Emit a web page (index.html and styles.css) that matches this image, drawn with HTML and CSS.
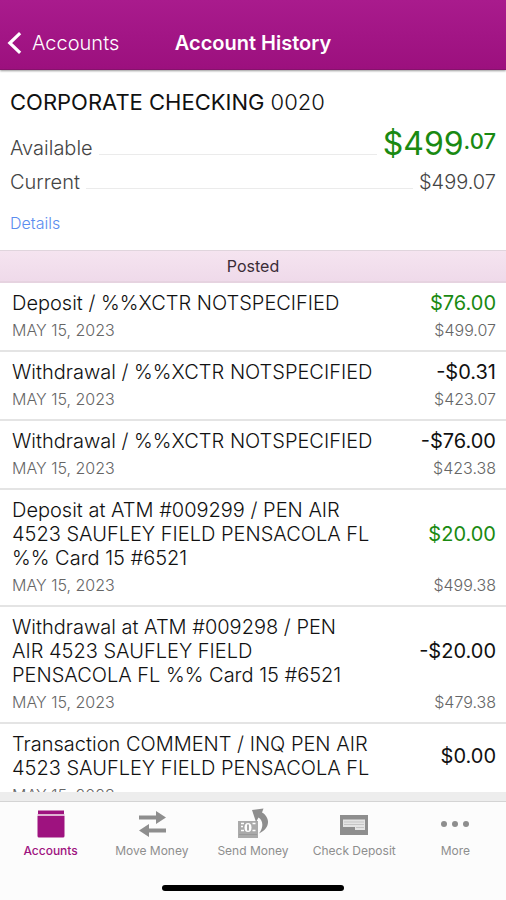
FILE: index.html
```html
<!DOCTYPE html>
<html lang="en">
  <head>
    <meta charset="utf-8" />
    <meta name="viewport" content="width=device-width, initial-scale=1" />
    <title>Account History</title>
    <link rel="stylesheet" href="styles.css" />
  </head>

  <body>
    <header class="navbar">
      <a class="back" href="#accounts">
        <svg class="back-icon" viewBox="0 0 16 24" aria-hidden="true">
          <path d="M14 1.5 L3 12 L14 22.5" fill="none" stroke="currentColor" stroke-width="3.4" />
        </svg>
        Accounts
      </a>
      <h1 class="title">Account History</h1>
    </header>

    <main class="content">
      <section class="summary">
        <h2 class="account-name">CORPORATE CHECKING <span class="account-number">0020</span></h2>
        <div class="balance">
          <span class="balance-label">Available</span>
          <span class="leader"></span>
          <span class="available">$499<span class="cents">.07</span></span>
        </div>
        <div class="balance">
          <span class="balance-label">Current</span>
          <span class="leader"></span>
          <span class="current">$499.07</span>
        </div>
        <a class="details" href="#details">Details</a>
      </section>

      <h2 class="group">Posted</h2>
      <ul class="transactions">
        <li class="transaction">
          <span class="description">Deposit / %%XCTR NOTSPECIFIED</span>
          <span class="amount credit">$76.00</span>
          <span class="date">MAY 15, 2023</span>
          <span class="running">$499.07</span>
        </li>
        <li class="transaction">
          <span class="description">Withdrawal / %%XCTR NOTSPECIFIED</span>
          <span class="amount">-$0.31</span>
          <span class="date">MAY 15, 2023</span>
          <span class="running">$423.07</span>
        </li>
        <li class="transaction">
          <span class="description">Withdrawal / %%XCTR NOTSPECIFIED</span>
          <span class="amount">-$76.00</span>
          <span class="date">MAY 15, 2023</span>
          <span class="running">$423.38</span>
        </li>
        <li class="transaction">
          <span class="description">Deposit at ATM #009299 / PEN AIR 4523 SAUFLEY FIELD PENSACOLA FL %% Card 15 #6521</span>
          <span class="amount credit">$20.00</span>
          <span class="date">MAY 15, 2023</span>
          <span class="running">$499.38</span>
        </li>
        <li class="transaction">
          <span class="description">Withdrawal at ATM #009298 / PEN<br />AIR 4523 SAUFLEY FIELD<br />PENSACOLA FL %% Card 15 #6521</span>
          <span class="amount">-$20.00</span>
          <span class="date">MAY 15, 2023</span>
          <span class="running">$479.38</span>
        </li>
        <li class="transaction">
          <span class="description">Transaction COMMENT / INQ PEN AIR 4523 SAUFLEY FIELD PENSACOLA FL</span>
          <span class="amount">$0.00</span>
          <span class="date">MAY 15, 2023</span>
        </li>
      </ul>
    </main>

    <footer class="footer">
      <nav class="tabs">
        <a class="tab active" href="#accounts">
          <svg class="tab-icon" viewBox="0 0 32 32" aria-hidden="true">
            <path d="M3 2.5h26v3.5H3z M2.500 8h27v20a1.500 1.500 0 0 1-1.500 1.500H4a1.500 1.500 0 0 1-1.500-1.500z" fill="currentColor" />
            <path d="M2.500 6h27v2h-27z" fill="#dfb3d3" />
          </svg>
          Accounts
        </a>
        <a class="tab" href="#move">
          <svg class="tab-icon" viewBox="0 0 32 32" aria-hidden="true">
            <path d="M3 7.500h17V3l10 6.500-10 6.500v-4.500H3z M30 20.500H13V16L3 22.500 13 29v-4.500h17z" fill="currentColor" />
          </svg>
          Move Money
        </a>
        <a class="tab" href="#send">
          <svg class="tab-icon" viewBox="0 0 32 32" aria-hidden="true">
            <path d="M1 13h20v17H1z" fill="#aaa" />
            <path d="M4 15.500h3M4 18.500h2M4 22.500h3M15.500 15.500h3M15.500 22.500h3" stroke="#fff" stroke-width="1.500" />
            <ellipse cx="11" cy="19.500" rx="3.500" ry="4.500" fill="#fff" />
            <path d="M11 16.500v6" stroke="currentColor" stroke-width="1.500" />
            <path d="M2 26.500h18" stroke="#999" />
            <path d="M15 2 L26.500 0.500 L25 4.500 C33 9 34 20 22 25.500 C27 19 26 12 21.500 9.500 L19 14 Z" fill="currentColor" />
          </svg>
          Send Money
        </a>
        <a class="tab" href="#deposit">
          <svg class="tab-icon" viewBox="0 0 32 32" aria-hidden="true">
            <path d="M2 7h28v20H2z" fill="currentColor" />
            <path d="M5 11.500h22V22H17v-3H5z" fill="#e4e4e4" />
            <path d="M6 14h20M6 16.500h20M18 19.500h8" stroke="#c5c5c5" />
          </svg>
          Check Deposit
        </a>
        <a class="tab" href="#more">
          <svg class="tab-icon" viewBox="0 0 32 32" aria-hidden="true">
            <g fill="currentColor">
              <circle cx="5" cy="16" r="3" />
              <circle cx="16" cy="16" r="3" />
              <circle cx="27" cy="16" r="3" />
            </g>
          </svg>
          More
        </a>
      </nav>
      <div class="home-indicator"></div>
    </footer>
  </body>
</html>
```

FILE: styles.css
```css
* {
  box-sizing: border-box;
}
body {
  margin: 0;
  height: 100vh;
  display: flex;
  flex-direction: column;
  font-family: Inter, "Liberation Sans", sans-serif;
  font-weight: 300;
  color: #111;
  background-color: #fff;
}
a {
  text-decoration: none;
}

/* top bar */
.navbar {
  display: grid;
  grid-template-columns: 1fr auto 1fr;
  align-items: center;
  height: 70px;
  padding: 16px 7px 0;
  color: #fff;
  background: linear-gradient(#a91b8d, #9c107e);
  border-bottom: 1px solid #86116c;
  box-shadow: 0 1px 2px rgba(0, 0, 0, 0.4);
  flex: none;
  z-index: 1;
}
.back {
  display: flex;
  align-items: center;
  gap: 10px;
  color: #fff;
  font-size: 20px;
  font-weight: 300;
}
.back-icon {
  width: 15px;
  height: 24px;
}
.title {
  margin: 0;
  font-size: 20px;
  font-weight: 600;
}

.content {
  flex: 1;
  min-height: 0;
  overflow: hidden;
}

/* balances */
.summary {
  height: 180px;
  padding: 16px 10px 0;
}
.account-name {
  margin: 0 0 9px;
  font-size: 22px;
  line-height: 32px;
  font-weight: 400;
}
.account-number {
  font-weight: 300;
}
.balance {
  display: flex;
  align-items: baseline;
  gap: 6px;
  height: 38px;
  line-height: 34px;
  font-size: 20px;
  color: #444;
}
.leader {
  flex: 1;
  border-bottom: 1px solid #ebebeb;
}
.available {
  font-size: 32px;
  font-weight: 400;
  color: #1a8a12;
}
.cents {
  font-size: 22px;
  font-weight: 500;
  line-height: 1;
  vertical-align: 6px;
}
.details {
  display: inline-block;
  margin-top: 8px;
  font-size: 16px;
  line-height: 24px;
  color: #5b8def;
}

.group {
  margin: 0;
  height: 33px;
  line-height: 30px;
  text-align: center;
  font-size: 16px;
  font-weight: 400;
  color: #3a2c37;
  background: linear-gradient(#f5e4f0, #efdaea);
  border-top: 1px solid #e0d5dd;
  border-bottom: 2px solid #e6d3e0;
}

/* transactions */
.transactions {
  list-style: none;
  margin: 0;
  padding: 0;
}
.transaction {
  display: grid;
  grid-template-columns: 3fr 1fr;
  row-gap: 5px;
  align-items: center;
  padding: 8px 10px 10px 12px;
  border-bottom: 2px solid #e4e4e4;
}
.description,
.amount {
  font-size: 20px;
  line-height: 24px;
}
.amount {
  text-align: right;
  font-weight: 400;
}
.credit {
  color: #1a8a12;
}
.date,
.running {
  font-size: 16px;
  line-height: 20px;
  color: #666;
}
.running {
  text-align: right;
}

/* bottom tabs */
.footer {
  flex: none;
  background-color: #fcfcfc;
  border-top: 9px solid #ededed;
}
.tabs {
  display: grid;
  grid-template-columns: repeat(5, 1fr);
  padding-top: 6px;
  border-top: 1px solid #d4d4d4;
}
.tab {
  display: flex;
  flex-direction: column;
  align-items: center;
  gap: 3px;
  font-size: 12px;
  line-height: 16px;
  font-weight: 400;
  white-space: nowrap;
  color: #8e8e8e;
}
.active {
  color: #9e127f;
  font-weight: 500;
}
.tab-icon {
  width: 32px;
  height: 32px;
}
.home-indicator {
  width: 36%;
  height: 6px;
  margin: 26px auto 9px;
  border-radius: 3px;
  background-color: #000;
}
```
